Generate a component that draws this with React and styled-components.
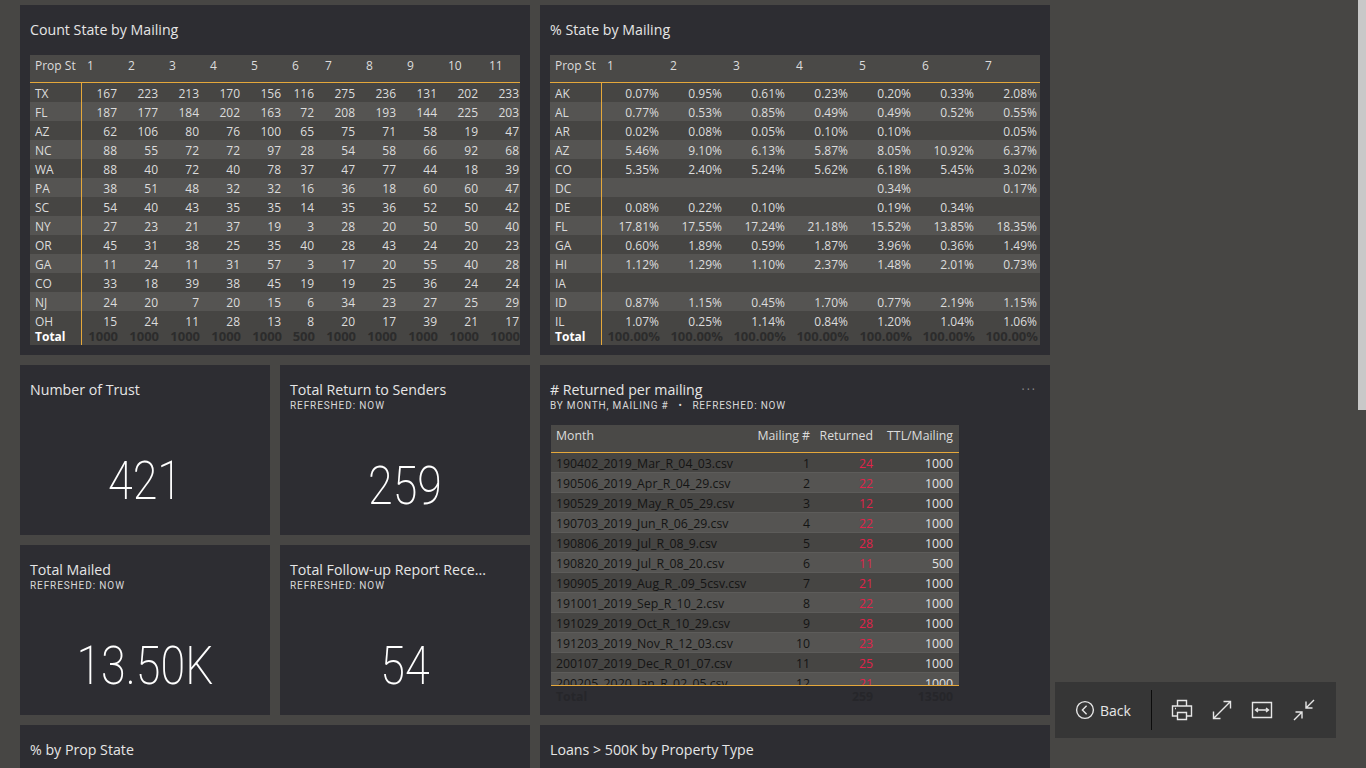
import React from 'react'
import styled, { createGlobalStyle } from 'styled-components'

const GlobalStyle = createGlobalStyle`
  html, body {
    margin: 0;
    height: 100%;
    overflow: hidden;
    background: #474644;
  }
`

const countRows = [
  ['TX', 167, 223, 213, 170, 156, 116, 275, 236, 131, 202, 233],
  ['FL', 187, 177, 184, 202, 163, 72, 208, 193, 144, 225, 203],
  ['AZ', 62, 106, 80, 76, 100, 65, 75, 71, 58, 19, 47],
  ['NC', 88, 55, 72, 72, 97, 28, 54, 58, 66, 92, 68],
  ['WA', 88, 40, 72, 40, 78, 37, 47, 77, 44, 18, 39],
  ['PA', 38, 51, 48, 32, 32, 16, 36, 18, 60, 60, 47],
  ['SC', 54, 40, 43, 35, 35, 14, 35, 36, 52, 50, 42],
  ['NY', 27, 23, 21, 37, 19, 3, 28, 20, 50, 50, 40],
  ['OR', 45, 31, 38, 25, 35, 40, 28, 43, 24, 20, 23],
  ['GA', 11, 24, 11, 31, 57, 3, 17, 20, 55, 40, 28],
  ['CO', 33, 18, 39, 38, 45, 19, 19, 25, 36, 24, 24],
  ['NJ', 24, 20, 7, 20, 15, 6, 34, 23, 27, 25, 29],
  ['OH', 15, 24, 11, 28, 13, 8, 20, 17, 39, 21, 17],
]
const countTotal = ['Total', 1000, 1000, 1000, 1000, 1000, 500, 1000, 1000, 1000, 1000, 1000]

const pctRows = [
  ['AK', '0.07%', '0.95%', '0.61%', '0.23%', '0.20%', '0.33%', '2.08%'],
  ['AL', '0.77%', '0.53%', '0.85%', '0.49%', '0.49%', '0.52%', '0.55%'],
  ['AR', '0.02%', '0.08%', '0.05%', '0.10%', '0.10%', '', '0.05%'],
  ['AZ', '5.46%', '9.10%', '6.13%', '5.87%', '8.05%', '10.92%', '6.37%'],
  ['CO', '5.35%', '2.40%', '5.24%', '5.62%', '6.18%', '5.45%', '3.02%'],
  ['DC', '', '', '', '', '0.34%', '', '0.17%'],
  ['DE', '0.08%', '0.22%', '0.10%', '', '0.19%', '0.34%', ''],
  ['FL', '17.81%', '17.55%', '17.24%', '21.18%', '15.52%', '13.85%', '18.35%'],
  ['GA', '0.60%', '1.89%', '0.59%', '1.87%', '3.96%', '0.36%', '1.49%'],
  ['HI', '1.12%', '1.29%', '1.10%', '2.37%', '1.48%', '2.01%', '0.73%'],
  ['IA', '', '', '', '', '', '', ''],
  ['ID', '0.87%', '1.15%', '0.45%', '1.70%', '0.77%', '2.19%', '1.15%'],
  ['IL', '1.07%', '0.25%', '1.14%', '0.84%', '1.20%', '1.04%', '1.06%'],
]
const pctTotal = ['Total', ...Array(7).fill('100.00%')]

const mailings = [
  ['190402_2019_Mar_R_04_03.csv', 1, 24, 1000],
  ['190506_2019_Apr_R_04_29.csv', 2, 22, 1000],
  ['190529_2019_May_R_05_29.csv', 3, 12, 1000],
  ['190703_2019_Jun_R_06_29.csv', 4, 22, 1000],
  ['190806_2019_Jul_R_08_9.csv', 5, 28, 1000],
  ['190820_2019_Jul_R_08_20.csv', 6, 11, 500],
  ['190905_2019_Aug_R_.09_5csv.csv', 7, 21, 1000],
  ['191001_2019_Sep_R_10_2.csv', 8, 22, 1000],
  ['191029_2019_Oct_R_10_29.csv', 9, 28, 1000],
  ['191203_2019_Nov_R_12_03.csv', 10, 23, 1000],
  ['200107_2019_Dec_R_01_07.csv', 11, 25, 1000],
  ['200205_2020_Jan_R_02_05.csv', 12, 21, 1000],
]

const uiFont = `"Open Sans", "Noto Sans", sans-serif`

const Page = styled.div`
  width: 1030px;
  height: 763px;
  padding: 5px 0 0 20px;
  display: grid;
  grid-template-columns: 250px 250px 510px;
  grid-template-rows: 350px 170px 170px 170px;
  gap: 10px;
  font-family: ${uiFont};
  overflow: hidden;
`

const Card = styled.section`
  background: #2d2d32;
  padding: 15px 10px 0;
  position: relative;
  min-width: 0;
  overflow: hidden;
  grid-column: ${props => props.$col || 'auto'};
  grid-row: ${props => props.$row || 'auto'};
`

const Title = styled.div`
  color: #e6e6e6;
  font-size: 14.2px;
  line-height: 20px;
  white-space: nowrap;
`

const Subtitle = styled.div`
  font-family: Roboto, sans-serif;
  color: #d8d8d8;
  font-size: 10px;
  line-height: 12px;
  letter-spacing: ${props => props.$spacing || 0.9}px;
  white-space: pre;
`

const KpiValue = styled.div`
  font-family: Roboto, sans-serif;
  font-weight: 200;
  font-size: 54px;
  line-height: 60px;
  color: #fff;
  text-align: center;
  margin-top: ${props => props.$top}px;
  transform: scaleX(0.83);
`

const Matrix = styled.div`
  margin-top: 15px;
  height: 290px;
  overflow: hidden;
  font-size: 12px;
`

const Row = styled.div`
  display: grid;
  grid-template-columns: ${props => props.$cols};
  background: ${props => props.$alt ? '#555452' : '#464543'};
  height: 19px;
  line-height: 21px;
  color: #dcdcdc;
  white-space: nowrap;
`

const HeadRow = styled(Row)`
  background: #4a4947;
  height: 27px;
  line-height: 22px;
  border-bottom: 1px solid #e5a83b;
  box-sizing: content-box;
`

const TotalRow = styled(Row)`
  height: 15px;
  line-height: 13px;
  color: #2c2c2c;
  font-weight: 700;
  background: #464543;
`

const RowLabel = styled.div`
  padding-left: 5px;
  border-right: 1px solid #e5a83b;
  color: ${props => props.$bold ? '#fff' : 'inherit'};
  font-weight: ${props => props.$bold ? 700 : 400};
`

const HeadCell = styled.div`
  padding-left: 5px;
`

const Num = styled.div`
  text-align: right;
  padding-right: 6px;
`

const TotalNum = styled(Num)`
  font-size: 13px;
  padding-right: 5px;
`

const ReturnedTable = styled.div`
  margin: 13px 0 0 1px;
  width: 408px;
  font-size: 12.3px;
`

const ReturnedBody = styled.div`
  height: 232px;
  overflow: hidden;
  border-bottom: 1px solid #e5a83b;
`

const MailRow = styled(Row)`
  height: 20px;
  line-height: 22px;
  color: #141414;
  box-shadow: inset 0 -1px 0 #5d5c5a;
`

const Month = styled.div`
  padding-left: 5px;
  overflow: hidden;
`

const Returned = styled(Num)`
  color: #e0224a;
`

const Light = styled(Num)`
  color: #e4e4e4;
`

const MailTotal = styled(Row)`
  background: transparent;
  color: #26262a;
  font-weight: 700;
  height: 22px;
  line-height: 22px;
`

const MoreDots = styled.div`
  position: absolute;
  top: 18px;
  right: 13px;
  color: #8a8a8a;
  font-size: 12px;
  letter-spacing: 2px;
  line-height: 14px;
`

const ScrollThumb = styled.div`
  position: fixed;
  top: 0;
  right: 0;
  width: 8px;
  height: 410px;
  background: #c8c8c8;
`

const Toolbar = styled.div`
  position: fixed;
  left: 1055px;
  top: 682px;
  width: 281px;
  height: 56px;
  background: #363636;
  display: flex;
  align-items: center;
  font-family: ${uiFont};
  color: #e6e6e6;
`

const BackButton = styled.div`
  display: flex;
  align-items: center;
  width: 96px;
  padding-left: 20px;
  box-sizing: border-box;
  gap: 5px;
  font-size: 14px;
`

const Divider = styled.div`
  width: 1px;
  height: 40px;
  background: #0c0c0c;
`

const Tools = styled.div`
  display: flex;
  align-items: center;
  padding-left: 18px;
  gap: 16px;
`

const Icon = styled.svg`
  width: 24px;
  height: 24px;
  display: block;
  fill: none;
  stroke: #e6e6e6;
  stroke-width: 1.4;
`

const BackIcon = styled(Icon)`
  width: 20px;
  height: 20px;
`

const CollapseIcon = styled(Icon)`
  margin-left: 2px;
`

const countCols = '52px repeat(5, 41px) 33px repeat(5, 41px)'
const pctCols = '52px repeat(7, 63px)'
const mailCols = '201px 64px 63px 80px'

function CrossTab({ title, col, cols, headers, rows, total }) {
  return (
    <Card $col={col} $row="1">
      <Title>{title}</Title>
      <Matrix>
        <HeadRow $cols={cols}>
          {headers.map(h => <HeadCell key={h}>{h}</HeadCell>)}
        </HeadRow>
        {rows.map((r, i) => (
          <Row key={r[0]} $cols={cols} $alt={i % 2 === 1}>
            <RowLabel>{r[0]}</RowLabel>
            {r.slice(1).map((v, j) => <Num key={j}>{v}</Num>)}
          </Row>
        ))}
        <TotalRow $cols={cols}>
          <RowLabel $bold>{total[0]}</RowLabel>
          {total.slice(1).map((v, j) => <TotalNum key={j}>{v}</TotalNum>)}
        </TotalRow>
      </Matrix>
    </Card>
  )
}

function App() {
  return (
    <>
      <GlobalStyle />
      <Page>
        <CrossTab
          title="Count State by Mailing"
          col="1 / span 2"
          cols={countCols}
          headers={['Prop St', 1, 2, 3, 4, 5, 6, 7, 8, 9, 10, 11]}
          rows={countRows}
          total={countTotal}
        />
        <CrossTab
          title="% State by Mailing"
          col="3"
          cols={pctCols}
          headers={['Prop St', 1, 2, 3, 4, 5, 6, 7]}
          rows={pctRows}
          total={pctTotal}
        />

        <Card $col="1" $row="2">
          <Title>Number of Trust</Title>
          <KpiValue $top={51}>421</KpiValue>
        </Card>
        <Card $col="2" $row="2">
          <Title>Total Return to Senders</Title>
          <Subtitle>REFRESHED: NOW</Subtitle>
          <KpiValue $top={44}>259</KpiValue>
        </Card>

        <Card $col="3" $row="2 / span 2">
          <Title># Returned per mailing</Title>
          <Subtitle $spacing={0.8}>{'BY MONTH, MAILING #   •   REFRESHED: NOW'}</Subtitle>
          <MoreDots>···</MoreDots>
          <ReturnedTable>
            <HeadRow $cols={mailCols}>
              <Month>Month</Month>
              <Num>Mailing #</Num>
              <Num>Returned</Num>
              <Num>TTL/Mailing</Num>
            </HeadRow>
            <ReturnedBody>
              {mailings.map((m, i) => (
                <MailRow key={m[0]} $cols={mailCols} $alt={i % 2 === 1}>
                  <Month>{m[0]}</Month>
                  <Num>{m[1]}</Num>
                  <Returned>{m[2]}</Returned>
                  <Light>{m[3]}</Light>
                </MailRow>
              ))}
            </ReturnedBody>
            <MailTotal $cols={mailCols}>
              <Month>Total</Month>
              <Num></Num>
              <Num>259</Num>
              <Num>13500</Num>
            </MailTotal>
          </ReturnedTable>
        </Card>

        <Card $col="1" $row="3">
          <Title>Total Mailed</Title>
          <Subtitle>REFRESHED: NOW</Subtitle>
          <KpiValue $top={44}>13.50K</KpiValue>
        </Card>
        <Card $col="2" $row="3">
          <Title>Total Follow-up Report Rece...</Title>
          <Subtitle>REFRESHED: NOW</Subtitle>
          <KpiValue $top={44}>54</KpiValue>
        </Card>

        <Card $col="1 / span 2" $row="4">
          <Title>% by Prop State</Title>
        </Card>
        <Card $col="3" $row="4">
          <Title>{'Loans > 500K by Property Type'}</Title>
        </Card>
      </Page>

      <ScrollThumb />

      <Toolbar>
        <BackButton>
          <BackIcon viewBox="0 0 20 20">
            <circle cx="10" cy="10" r="8.4" />
            <path d="M11.6 5.8 7.4 10l4.2 4.2" />
          </BackIcon>
          Back
        </BackButton>
        <Divider />
        <Tools>
          <Icon viewBox="0 0 24 24">
            <path d="M7.5 7.5V2.5h9v5M7.5 18H2.5V8h19v10h-5M7.5 14.5h9v7h-9zM5 10.5h1" />
          </Icon>
          <Icon viewBox="0 0 24 24">
            <path d="M3.5 20.5 20.500 3.500M13.500 3.500h7v7M3.500 13.500v7h7" />
          </Icon>
          <Icon viewBox="0 0 24 24">
            <path d="M2.500 4.500h19v15h-19zM5.500 12h13M8 10l-2.500 2L8 14M16 10l2.500 2-2.500 2" />
          </Icon>
          <CollapseIcon viewBox="0 0 24 24">
            <path d="M14 10 22 2M14 3.500V10h6.500M2 22l8-8M3.500 14H10v6.500" />
          </CollapseIcon>
        </Tools>
      </Toolbar>
    </>
  )
}

export default App
